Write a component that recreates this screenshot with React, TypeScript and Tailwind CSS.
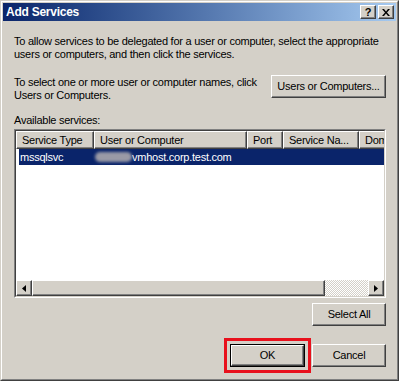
import React from 'react';

const font = "font-['Liberation_Sans',Tahoma,Arial,sans-serif]";

// Classic raised 3D edge used by buttons and scrollbar pieces
const raised =
  'border border-t-white border-l-white border-r-[#404040] border-b-[#404040] shadow-[inset_-1px_-1px_#808080]';

const Button = ({ label, className = '' }: { label: string; className?: string }) => (
  <div className={`flex items-center justify-center bg-[#d4d0c8] text-[11px] text-black whitespace-nowrap ${raised} ${className}`}>
    {label}
  </div>
);

const columns = [
  { label: 'Service Type', w: 'w-[78px]' },
  { label: 'User or Computer', w: 'w-[153px]' },
  { label: 'Port', w: 'w-[36px]' },
  { label: 'Service Na...', w: 'w-[76px]' },
  { label: 'Dom', w: 'w-[40px]' },
];

export default function App() {
  return (
    <div className={`w-[400px] h-[382px] bg-white ${font} tracking-[-0.25px]`}>
      <div className="w-[399px] h-[381px] border border-t-[#d4d0c8] border-l-[#d4d0c8] border-r-[#404040] border-b-[#404040]">
        <div className="h-full border border-t-white border-l-white border-r-[#808080] border-b-[#808080] bg-[#d4d0c8] p-px flex flex-col">
          {/* Title bar */}
          <div className="h-[18px] shrink-0 flex items-center justify-between bg-gradient-to-r from-[#0a246a] to-[#a6caf0] pl-[3px] pr-[2px]">
            <span className="text-white font-bold text-[12px]">Add Services</span>
            <div className="flex gap-[2px]">
              <div className={`w-[16px] h-[14px] bg-[#d4d0c8] flex items-center justify-center text-[11px] font-bold leading-none ${raised}`}>?</div>
              <div className={`w-[16px] h-[14px] bg-[#d4d0c8] flex items-center justify-center ${raised}`}>
                <svg width="8" height="7" viewBox="0 0 8 7">
                  <path d="M0 0h2l2 2.5L6 0h2L5 3.5L8 7H6L4 4.5L2 7H0l3-3.5z" fill="#000" />
                </svg>
              </div>
            </div>
          </div>

          {/* Body */}
          <div className="flex-1 flex flex-col pl-[11px] pr-[10px] pt-[14px] text-[11px] leading-[13px] text-black whitespace-nowrap">
            <p>
              To allow services to be delegated for a user or computer, select the appropriate
              <br />
              users or computers, and then click the services.
            </p>

            <div className="mt-[15px] flex items-start justify-between">
              <p>
                To select one or more user or computer names, click
                <br />
                Users or Computers.
              </p>
              <Button label="Users or Computers..." className="w-[115px] h-[23px] mt-[-1px]" />
            </div>

            <p className="mt-[12px]">Available services:</p>

            {/* List view */}
            <div className="mt-[2px] h-[169px] shrink-0 border border-t-[#808080] border-l-[#808080] border-r-white border-b-white">
              <div className="h-full border border-t-[#404040] border-l-[#404040] border-r-[#d4d0c8] border-b-[#d4d0c8] bg-white flex flex-col overflow-hidden">
                <div className="flex h-[18px] shrink-0">
                  {columns.map((c) => (
                    <div key={c.label} className={`${c.w} shrink-0 bg-[#d4d0c8] ${raised} pl-[5px] flex items-center overflow-hidden`}>
                      {c.label}
                    </div>
                  ))}
                </div>
                <div className="ml-[3px] h-[16px] bg-[#0a246a] text-white flex items-center">
                  <span className="w-[77px] pl-[1px]">mssqlsvc</span>
                  <span className="flex items-center">
                    <span className="w-[37px] h-[10px] rounded-full bg-[#9a9aa6] blur-[1.5px] ml-[-1px]" />
                    <span>vmhost.corp.test.com</span>
                  </span>
                </div>
                <div className="flex-1" />
                {/* Horizontal scrollbar */}
                <div className="h-[16px] flex shrink-0">
                  <div className={`w-[16px] bg-[#d4d0c8] flex items-center justify-center ${raised}`}>
                    <svg width="4" height="7" viewBox="0 0 4 7">
                      <path d="M4 0v7L0 3.5z" fill="#000" />
                    </svg>
                  </div>
                  <div className={`w-[293px] bg-[#d4d0c8] ${raised}`} />
                  <div className="flex-1 bg-[repeating-conic-gradient(#ffffff_0_25%,#d4d0c8_0_50%)] bg-[length:2px_2px]" />
                  <div className={`w-[16px] bg-[#d4d0c8] flex items-center justify-center ${raised}`}>
                    <svg width="4" height="7" viewBox="0 0 4 7">
                      <path d="M0 0v7L4 3.5z" fill="#000" />
                    </svg>
                  </div>
                </div>
              </div>
            </div>

            <div className="mt-[5px] flex justify-end">
              <Button label="Select All" className="w-[74px] h-[23px]" />
            </div>

            <div className="mt-[12px] flex justify-end items-center gap-[1px]">
              <div className="border-[3px] border-[#e8101c] p-[3px]">
                <div className="border border-black">
                  <Button label="OK" className="w-[73px] h-[21px]" />
                </div>
              </div>
              <Button label="Cancel" className="w-[74px] h-[23px]" />
            </div>
          </div>
        </div>
      </div>
    </div>
  );
}
